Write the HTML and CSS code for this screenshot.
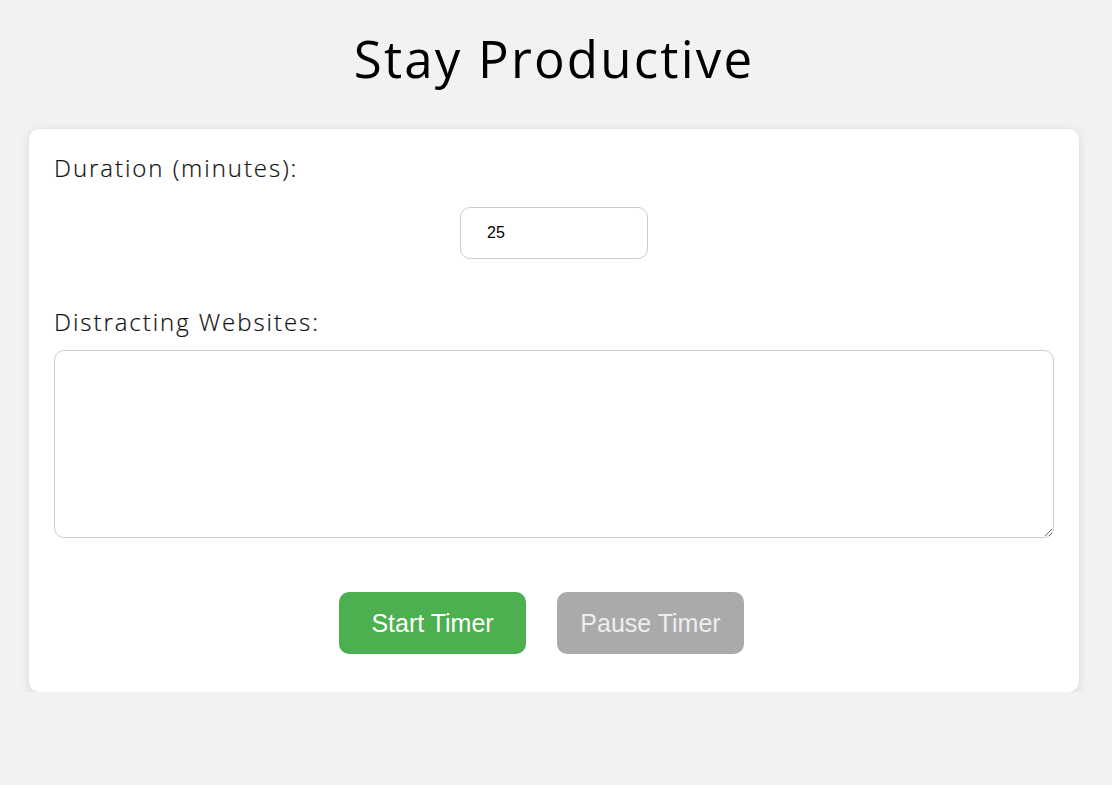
FILE: index.html
```html
<!DOCTYPE html>
<html lang="en">
<head>
<meta charset="utf-8">
<title>Stay Productive</title>
<link rel="stylesheet" href="styles.css">
</head>
<body>
<h1 class="title">Stay Productive</h1>
<main class="card">
  <label class="label" for="duration">Duration (minutes):</label>
  <div class="duration-row">
    <input class="duration" id="duration" type="text" value="25">
  </div>
  <label class="label label-sites" for="sites">Distracting Websites:</label>
  <textarea class="sites" id="sites"></textarea>
  <div class="buttons">
    <button class="btn btn-start">Start Timer</button>
    <button class="btn btn-pause">Pause Timer</button>
  </div>
</main>
</body>
</html>
```
FILE: styles.css
```css
html, body {
  margin: 0;
  padding: 0;
}
body {
  background: #f2f2f2;
  font-family: "Open Sans", "DejaVu Sans", sans-serif;
  color: #000;
  padding: 0 33px 0 29px;
}
.title {
  margin: 0;
  padding-top: 26px;
  height: 129px;
  box-sizing: border-box;
  text-align: center;
  font-weight: 400;
  font-size: 51px;
  line-height: 64px;
  letter-spacing: 2.2px;
}
.card {
  background: #fff;
  border-radius: 10px;
  box-shadow: 0 2px 10px rgba(0, 0, 0, 0.12);
  padding: 24px 25px 38px;
  display: flex;
  flex-direction: column;
}
.label {
  font-size: 24px;
  font-weight: 300;
  line-height: 30px;
  letter-spacing: 1.95px;
  color: #111;
  -webkit-text-stroke: 0.2px #111;
}
.duration-row {
  display: flex;
  justify-content: center;
  margin-top: 24px;
  margin-bottom: 48px;
}
.duration {
  width: 188px;
  height: 52px;
  box-sizing: border-box;
  border: 1px solid #ccc;
  border-radius: 10px;
  padding: 0 26px;
  font-family: "Liberation Sans", Arial, sans-serif;
  font-size: 16px;
  color: #000;
  outline: none;
}
.sites {
  margin-top: 13px;
  width: 1000px;
  height: 188px;
  box-sizing: border-box;
  border: 1px solid #ccc;
  border-radius: 10px;
  font-family: "Liberation Sans", Arial, sans-serif;
  font-size: 16px;
  outline: none;
  resize: both;
}
.buttons {
  display: flex;
  justify-content: center;
  gap: 31px;
  margin-top: 54px;
  padding-right: 25px;
}
.btn {
  width: 187px;
  height: 62px;
  border: none;
  border-radius: 10px;
  font-family: "Liberation Sans", Arial, sans-serif;
  font-size: 25px;
  color: #fff;
  cursor: pointer;
}
.btn-start {
  background: #4caf50;
}
.btn-pause {
  background: #aaaaaa;
  color: #eeeeee;
}
```
